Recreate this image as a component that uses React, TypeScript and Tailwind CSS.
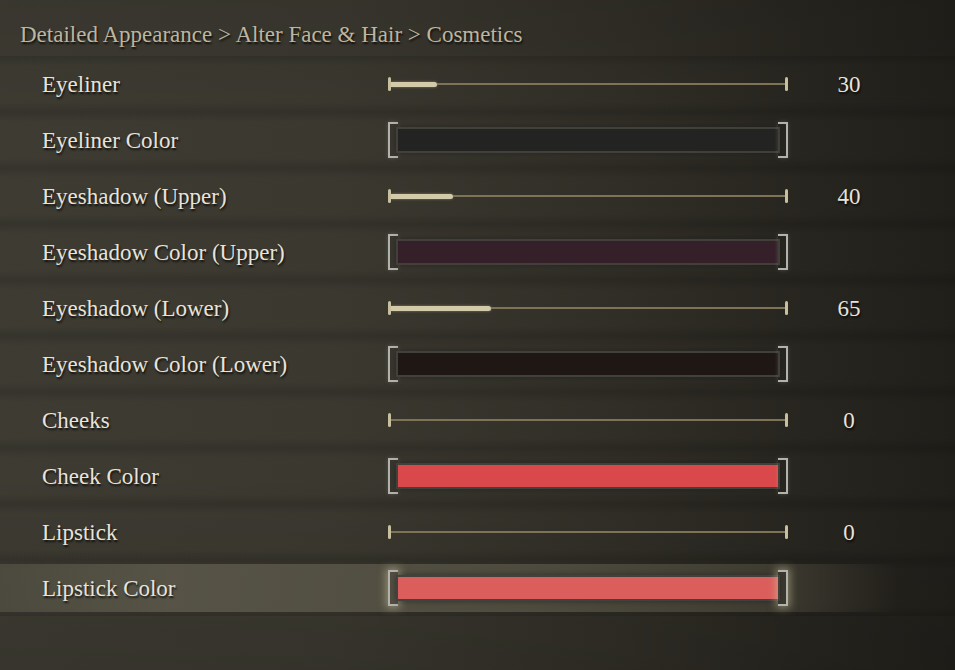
import React from "react";

type Row =
  | { label: string; kind: "slider"; value: number }
  | { label: string; kind: "color"; colorClass: string; selected?: boolean };

const rows: Row[] = [
  { label: "Eyeliner", kind: "slider", value: 30 },
  { label: "Eyeliner Color", kind: "color", colorClass: "bg-[#232321]" },
  { label: "Eyeshadow (Upper)", kind: "slider", value: 40 },
  { label: "Eyeshadow Color (Upper)", kind: "color", colorClass: "bg-[#35202a]" },
  { label: "Eyeshadow (Lower)", kind: "slider", value: 65 },
  { label: "Eyeshadow Color (Lower)", kind: "color", colorClass: "bg-[#1f1713]" },
  { label: "Cheeks", kind: "slider", value: 0 },
  { label: "Cheek Color", kind: "color", colorClass: "bg-[#d9484a]" },
  { label: "Lipstick", kind: "slider", value: 0 },
  { label: "Lipstick Color", kind: "color", colorClass: "bg-[#db5d5c]", selected: true },
];

const textShadow = "[text-shadow:1px_2px_2px_rgba(0,0,0,0.75)]";

function Slider({ value }: { value: number }) {
  const fill = Math.round((value / 255) * 394);
  return (
    <div className="w-[400px] h-[16px] flex items-center">
      <div className="w-[3px] h-[14px] rounded-full bg-[#c8bf9f] blur-[0.7px]" />
      <div className="flex-1 flex items-center">
        {fill > 0 && (
          <div
            className="h-[5px] rounded-r-full bg-[#d3caa9] blur-[0.5px] shadow-[0_0_3px_rgba(210,200,160,0.5)]"
            style={{ width: fill }}
          />
        )}
        <div className="flex-1 h-[2px] bg-[#7d7458] blur-[0.3px]" />
      </div>
      <div className="w-[3px] h-[14px] rounded-full bg-[#c8bf9f] blur-[0.7px]" />
    </div>
  );
}

function ColorBar({ colorClass, selected }: { colorClass: string; selected?: boolean }) {
  const glow = selected
    ? "shadow-[0_0_8px_2px_rgba(215,205,165,0.5)]"
    : "shadow-[0_0_4px_rgba(200,200,190,0.22)]";
  return (
    <div className="w-[400px] h-[36px] flex items-stretch">
      <div className={`w-[10px] border-l-2 border-y-2 border-[#b3b2ad] ${glow}`} />
      <div className="flex-1 flex items-center">
        <div
          className={`w-full h-[22px] ${colorClass} shadow-[0_0_0_2px_rgba(66,65,60,0.95),0_0_6px_2px_rgba(30,30,28,0.6)]`}
        />
      </div>
      <div className={`w-[10px] border-r-2 border-y-2 border-[#b3b2ad] ${glow}`} />
    </div>
  );
}

export default function App() {
  return (
    <div
      className="w-[955px] h-[670px] overflow-hidden bg-[linear-gradient(90deg,#3d3b32_0%,#3a382f_35%,#302e26_65%,#27251f_85%,#211f1a_100%)]"
      style={{ fontFamily: '"Liberation Serif", "Times New Roman", serif' }}
    >
      <div className="h-full w-full bg-[linear-gradient(180deg,rgba(0,0,0,0.08)_0%,rgba(0,0,0,0)_20%,rgba(0,0,0,0)_70%,rgba(0,0,0,0.1)_100%)]">
        <div className="h-[56px] pl-[20px] pt-[21px]">
          <div className={`text-[23px] leading-[28px] text-[#bdb5a0] ${textShadow}`}>
            Detailed Appearance &gt; Alter Face &amp; Hair &gt; Cosmetics
          </div>
        </div>
        <div className="flex flex-col">
          {rows.map((r) => {
            const selected = r.kind === "color" && r.selected;
            return (
              <div
                key={r.label}
                className="h-[56px] py-[4px] bg-[linear-gradient(180deg,rgba(0,0,0,0.13)_0%,rgba(0,0,0,0)_18%,rgba(0,0,0,0)_82%,rgba(0,0,0,0.13)_100%)]"
              >
                <div
                  className={`h-full flex items-center ${
                    selected
                      ? "bg-[linear-gradient(90deg,rgba(84,81,68,0.7)_0%,rgba(88,85,72,0.95)_18%,rgba(82,79,66,0.9)_55%,rgba(72,69,57,0.75)_80%,rgba(60,57,47,0.45)_88%,rgba(50,48,40,0)_94%)]"
                      : ""
                  }`}
                >
                  <div className={`w-[388px] pl-[42px] pt-[2px] text-[23px] leading-[28px] text-[#e7e3dc] ${textShadow}`}>
                    {r.label}
                  </div>
                  {r.kind === "slider" ? (
                    <Slider value={r.value} />
                  ) : (
                    <ColorBar colorClass={r.colorClass} selected={r.selected} />
                  )}
                  <div className={`w-[122px] pt-[2px] text-center text-[23px] leading-[28px] text-[#e7e3dc] ${textShadow}`}>
                    {r.kind === "slider" ? r.value : ""}
                  </div>
                </div>
              </div>
            );
          })}
        </div>
      </div>
    </div>
  );
}
